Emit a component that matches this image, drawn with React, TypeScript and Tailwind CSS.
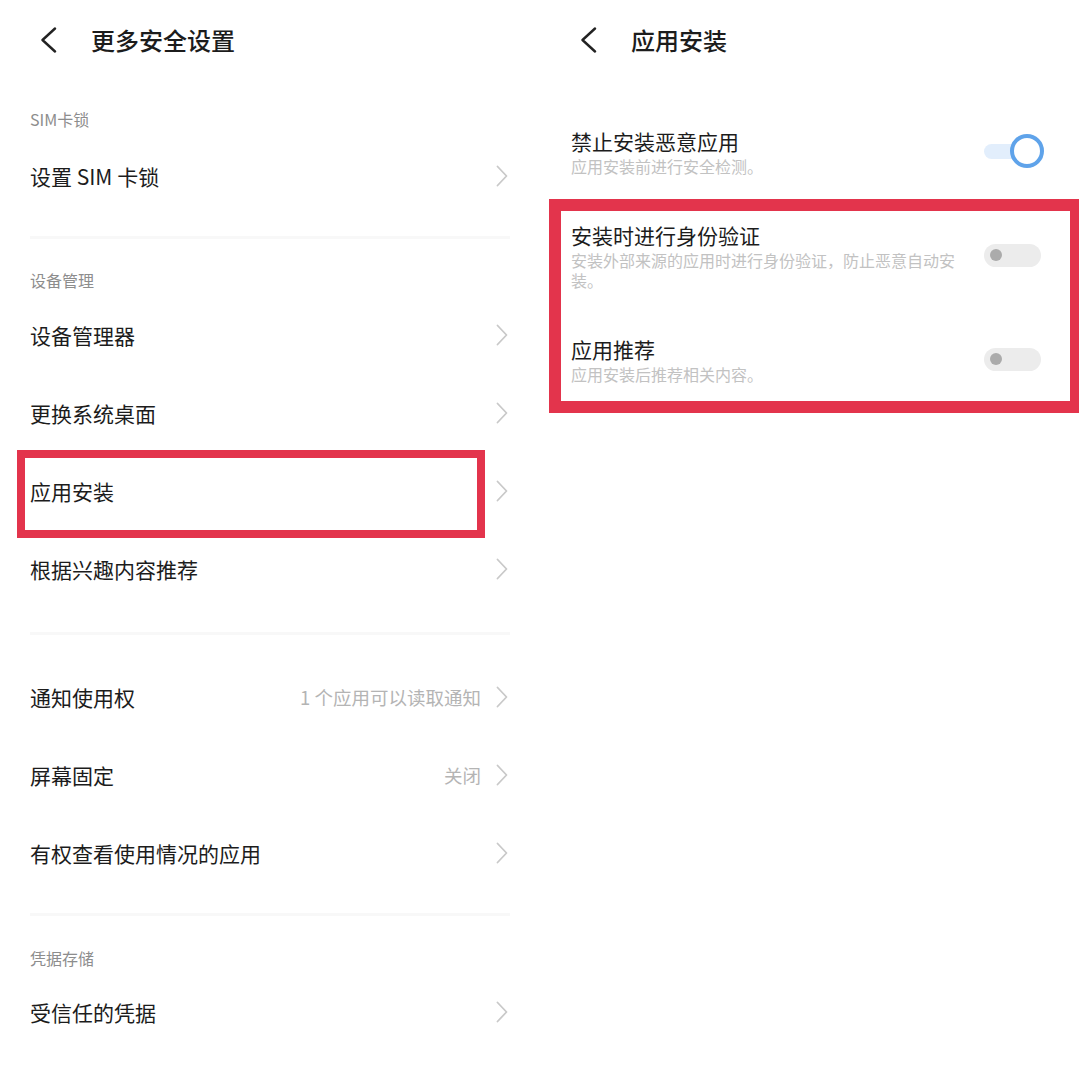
const font = { fontFamily: '"Noto Sans CJK SC", "Noto Sans", sans-serif' }

function BackArrow() {
  return (
    <svg width="17" height="26" viewBox="0 0 17 26" fill="none">
      <polyline points="15,1.5 2.5,13 15,24.5" stroke="#222" strokeWidth="2.4" strokeLinecap="round" strokeLinejoin="round" />
    </svg>
  )
}

function Chevron() {
  return (
    <svg width="12" height="22" viewBox="0 0 12 22" fill="none" className="shrink-0">
      <polyline points="1.5,1.5 10.5,11 1.5,20.5" stroke="#c9c9c9" strokeWidth="1.8" strokeLinecap="round" strokeLinejoin="round" />
    </svg>
  )
}

function Header({ title }: { title: string }) {
  return (
    <div className="flex h-[80px] items-center gap-[34px] pl-[40px]">
      <BackArrow />
      <span className="text-[24px] font-medium leading-[30px] text-[#1c1c1c]">{title}</span>
    </div>
  )
}

function SectionLabel({ label, top }: { label: string; top: string }) {
  return (
    <div className={`h-[57px] px-[30px] ${top} text-[16px] leading-[20px] text-[#8d8d8d]`}>{label}</div>
  )
}

function Separator({ top }: { top: string }) {
  return (
    <div className={top}>
      <div className="mx-[30px] h-[3px] bg-[#f8f8f8]" />
    </div>
  )
}

function Row({ label, value, boxed }: { label: string; value?: string; boxed?: boolean }) {
  return (
    <div className="relative flex h-[78px] items-center justify-between pl-[30px] pr-[32px]">
      <span className="text-[21px] leading-[26px] text-[#1c1c1c]">{label}</span>
      <div className="flex items-center gap-[15px]">
        {value ? <span className="text-[18.5px] leading-[24px] text-[#b4b4b4]">{value}</span> : null}
        <Chevron />
      </div>
      {boxed ? (
        <div className="absolute left-[17px] top-[-2px] h-[88px] w-[468px] border-[8px] border-[#e3344c]" />
      ) : null}
    </div>
  )
}

function ToggleOn() {
  return (
    <div className="relative h-[34px] w-[57px] shrink-0">
      <div className="absolute left-0 top-[10px] h-[15px] w-[44px] rounded-full bg-[#e2eefc]" />
      <div className="absolute left-[26px] top-0 h-[34px] w-[34px] rounded-full border-[4px] border-[#5fa3ea] bg-white" />
    </div>
  )
}

function ToggleOff() {
  return (
    <div className="flex h-[23px] w-[57px] shrink-0 items-center rounded-full bg-[#ececec]">
      <div className="ml-[6px] h-[12px] w-[12px] rounded-full bg-[#ababab]" />
    </div>
  )
}

function SwitchItem({ title, desc, on }: { title: string; desc: string; on?: boolean }) {
  return (
    <div className="flex items-center gap-[20px] py-[23px] pl-[31px] pr-[39px]">
      <div className="flex-1">
        <div className="text-[21px] leading-[26px] text-[#1c1c1c]">{title}</div>
        <div className="mt-[2px] text-[16px] leading-[20px] text-[#c2c2c2]">{desc}</div>
      </div>
      <div className="-mt-[2px]">{on ? <ToggleOn /> : <ToggleOff />}</div>
    </div>
  )
}

export default function App() {
  return (
    <div className="flex h-[1080px] w-[1080px] overflow-hidden bg-white" style={font}>
      <div className="flex w-[540px] flex-col">
        <Header title="更多安全设置" />
        <SectionLabel label="SIM卡锁" top="pt-[29px]" />
        <Row label="设置 SIM 卡锁" />
        <Separator top="pt-[21px]" />
        <SectionLabel label="设备管理" top="pt-[31px]" />
        <Row label="设备管理器" />
        <Row label="更换系统桌面" />
        <Row label="应用安装" boxed />
        <Row label="根据兴趣内容推荐" />
        <Separator top="pt-[24px]" />
        <div className="h-[23px]" />
        <Row label="通知使用权" value="1 个应用可以读取通知" />
        <Row label="屏幕固定" value="关闭" />
        <Row label="有权查看使用情况的应用" />
        <Separator top="pt-[21px]" />
        <SectionLabel label="凭据存储" top="pt-[32px]" />
        <Row label="受信任的凭据" />
      </div>

      <div className="relative flex w-[540px] flex-col">
        <Header title="应用安装" />
        <div className="h-[25px]" />
        <SwitchItem title="禁止安装恶意应用" desc="应用安装前进行安全检测。" on />
        <SwitchItem title="安装时进行身份验证" desc="安装外部来源的应用时进行身份验证，防止恶意自动安装。" />
        <SwitchItem title="应用推荐" desc="应用安装后推荐相关内容。" />
        <div className="absolute left-[9px] top-[199px] h-[214px] w-[530px] border-[12px] border-r-[9px] border-[#e3344c]" />
      </div>
    </div>
  )
}
